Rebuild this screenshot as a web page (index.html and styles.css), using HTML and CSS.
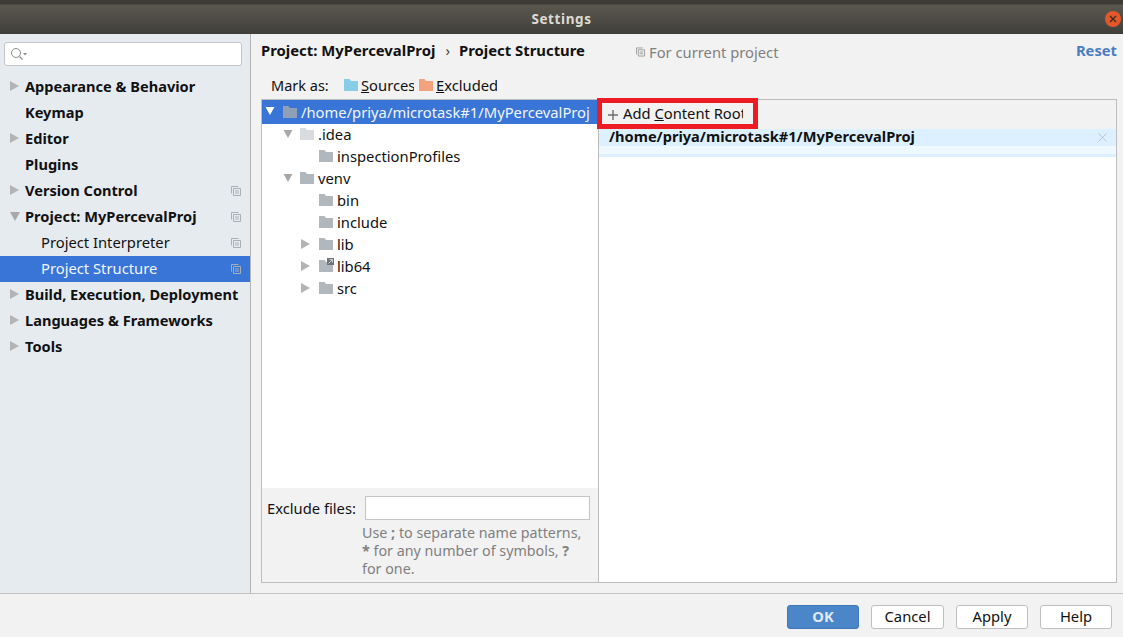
FILE: index.html
```html
<!DOCTYPE html>
<html lang="en">
<head>
<meta charset="utf-8">
<title>Settings</title>
<link rel="stylesheet" href="styles.css">
</head>
<body>
<svg class="defs" width="0" height="0" aria-hidden="true">
  <symbol id="folder" viewBox="0 0 14 12"><path d="M0 0H5.500L7 2H14V12H0Z"/></symbol>
  <symbol id="copy" viewBox="0 0 10 10"><path d="M.5 7.500V.5H7.500M2.500 2.500H9.500V9.500H2.500ZM4 5H8M4 7H8" fill="none" stroke="currentColor"/></symbol>
  <symbol id="right" viewBox="0 0 9 10"><path d="M0 0L9 5L0 10Z"/></symbol>
  <symbol id="down" viewBox="0 0 10 9"><path d="M0 0H10L5 9Z"/></symbol>
</svg>
<div class="window">
  <header class="titlebar">
    <span class="title">Settings</span>
    <span class="close"><svg viewBox="0 0 8 8" width="8" height="8"><path d="M1 1L7 7M7 1L1 7" stroke="#3b2a20" stroke-width="1.300"/></svg></span>
  </header>
  <div class="content">
    <aside class="sidebar">
      <div class="search"><svg width="18" height="14" viewBox="0 0 18 14"><circle cx="6" cy="6" r="4.500" fill="none" stroke="#8c8c8c"/><path d="M9.500 9.500L12.500 12.500" stroke="#8c8c8c" stroke-width="1.300"/><path d="M13 6H17L15 8.500Z" fill="#8c8c8c"/></svg></div>
      <nav class="nav">
        <div class="nav-row bold"><svg class="arrow"><use href="#right"/></svg><span>Appearance &amp; Behavior</span></div>
        <div class="nav-row bold"><span>Keymap</span></div>
        <div class="nav-row bold"><svg class="arrow"><use href="#right"/></svg><span>Editor</span></div>
        <div class="nav-row bold"><span>Plugins</span></div>
        <div class="nav-row bold"><svg class="arrow"><use href="#right"/></svg><span>Version Control</span><svg class="copy"><use href="#copy"/></svg></div>
        <div class="nav-row bold"><svg class="arrow-down"><use href="#down"/></svg><span>Project: MyPercevalProj</span><svg class="copy"><use href="#copy"/></svg></div>
        <div class="nav-row child"><span>Project Interpreter</span><svg class="copy"><use href="#copy"/></svg></div>
        <div class="nav-row child selected"><span>Project Structure</span><svg class="copy"><use href="#copy"/></svg></div>
        <div class="nav-row bold"><svg class="arrow"><use href="#right"/></svg><span>Build, Execution, Deployment</span></div>
        <div class="nav-row bold"><svg class="arrow"><use href="#right"/></svg><span>Languages &amp; Frameworks</span></div>
        <div class="nav-row bold"><svg class="arrow"><use href="#right"/></svg><span>Tools</span></div>
      </nav>
    </aside>
    <main class="main">
      <div class="crumbs">
        <b>Project: MyPercevalProj</b><span class="sep">›</span><b>Project Structure</b>
        <span class="scope"><svg class="copy-sm"><use href="#copy"/></svg>For current project</span>
        <a class="reset">Reset</a>
      </div>
      <div class="markbar">
        <span class="mark-label">Mark as:</span>
        <span class="mark mark-src"><svg class="mark-folder src"><use href="#folder"/></svg><span class="clip"><u>S</u>ources</span></span>
        <span class="mark mark-exc"><svg class="mark-folder exc"><use href="#folder"/></svg><span class="clip"><u>E</u>xcluded</span></span>
      </div>
      <div class="panel">
        <section class="left">
          <div class="tree">
            <div class="tree-row root"><svg class="t-down white"><use href="#down"/></svg><svg class="folder rootf"><use href="#folder"/></svg><span>/home/priya/microtask#1/MyPercevalProj</span></div>
            <div class="tree-row d1"><svg class="t-down"><use href="#down"/></svg><svg class="folder light"><use href="#folder"/></svg><span>.idea</span></div>
            <div class="tree-row d2"><svg class="folder"><use href="#folder"/></svg><span>inspectionProfiles</span></div>
            <div class="tree-row d1"><svg class="t-down"><use href="#down"/></svg><svg class="folder"><use href="#folder"/></svg><span>venv</span></div>
            <div class="tree-row d2"><svg class="folder"><use href="#folder"/></svg><span>bin</span></div>
            <div class="tree-row d2"><svg class="folder"><use href="#folder"/></svg><span>include</span></div>
            <div class="tree-row d2 has-arrow"><svg class="t-right"><use href="#right"/></svg><svg class="folder"><use href="#folder"/></svg><span>lib</span></div>
            <div class="tree-row d2 has-arrow"><svg class="t-right"><use href="#right"/></svg><span class="linkwrap"><svg class="folder"><use href="#folder"/></svg><svg class="linkbadge" viewBox="0 0 7 7" width="7" height="7"><rect width="7" height="7" fill="#6e7478"/><path d="M1.500 5.500L5 2M2.500 1.500H5.500V4.500" fill="none" stroke="#c9d2d8"/></svg></span><span>lib64</span></div>
            <div class="tree-row d2 has-arrow"><svg class="t-right"><use href="#right"/></svg><svg class="folder"><use href="#folder"/></svg><span>src</span></div>
          </div>
          <div class="exclude">
            <div class="exclude-row"><label>Exclude files:</label><div class="input"></div></div>
            <p class="hint">Use <b>;</b> to separate name patterns,<br><b>*</b> for any number of symbols, <b>?</b><br>for one.</p>
          </div>
        </section>
        <section class="right">
          <div class="toolbar">
            <svg class="plus" width="12" height="12" viewBox="0 0 12 12"><path d="M6 1V11M1 6H11" stroke="#6e6e6e" stroke-width="1.400"/></svg>
            <span class="add">Add <u>C</u>ontent Root</span>
          </div>
          <div class="root-head"><b>/home/priya/microtask#1/MyPercevalProj</b><svg width="9" height="9" viewBox="0 0 9 9"><path d="M.5 .5L8.500 8.500M8.500 .5L.5 8.500" stroke="#b9c6d0"/></svg></div>
          <div class="root-sub"></div>
        </section>
        <div class="highlight"></div>
      </div>
    </main>
  </div>
  <footer class="footer">
    <button class="btn primary">OK</button>
    <button class="btn w73">Cancel</button>
    <button class="btn">Apply</button>
    <button class="btn">Help</button>
  </footer>
</div>
</body>
</html>
```
FILE: styles.css
```css
* { box-sizing: border-box; }
html, body { margin: 0; height: 100%; overflow: hidden; }
body { font-family: "Noto Sans", "Open Sans", sans-serif; font-size: 14.75px; color: #111; background: #f2f2f2; }
.defs { position: absolute; }
.window { display: flex; flex-direction: column; height: 637px; width: 1123px; }

.titlebar { position: relative; height: 34px; flex: none; display: flex; align-items: center; justify-content: center; padding-top: 4px;
  background: linear-gradient(#3c3b36 0, #3c3b36 4px, #5a574e 5px, #4d4b44 20px, #3f3e39 34px); }
.title { color: #dfdbd2; font-weight: 700; font-size: 13.500px; letter-spacing: .6px; }
.close { position: absolute; right: 2px; top: 11px; width: 16px; height: 16px; border-radius: 50%; background: #e2582a; display: flex; align-items: center; justify-content: center; }

.content { flex: 1; display: flex; min-height: 0; }
.sidebar { width: 251px; flex: none; background: #e6ebf0; border-right: 1px solid #b4b4b4; padding-top: 8px; }
.search { width: 238px; height: 24px; margin-left: 4px; background: #fff; border: 1px solid #c4c4c4; border-radius: 3px; display: flex; align-items: center; padding-left: 5px; }
.nav { margin-top: 8px; }
.nav-row { position: relative; height: 26px; display: flex; align-items: center; padding: 0 0 2px 25px; white-space: nowrap; }
.nav-row.bold { font-weight: 700; font-size: 14.6px; }
.nav-row.child { padding-left: 41px; }
.nav-row.selected { background: #3875d7; color: #f2f6fc; }
.arrow { position: absolute; left: 10px; top: 7px; width: 9px; height: 10px; fill: #b4b4b4; }
.arrow-down { position: absolute; left: 10px; top: 8px; width: 10px; height: 9px; fill: #a8a8a8; }
.copy { position: absolute; left: 231px; top: 8px; width: 10px; height: 10px; color: #a9b0b5; }

.main { flex: 1; min-width: 0; display: flex; flex-direction: column; padding: 0 6px 10px 10px; }
.crumbs { position: relative; height: 35px; flex: none; display: flex; align-items: center; padding-bottom: 4px; }
.crumbs b { font-size: 14.85px; }
.sep { margin: 0 9px 0 10px; color: #444; }
.scope { position: absolute; left: 375px; top: 8px; color: #808080; display: flex; align-items: center; }
.copy-sm { width: 9px; height: 10px; color: #9a9a9a; margin-right: 4px; }
.reset { margin-left: auto; color: #4a7cc4; font-weight: 700; }
.markbar { height: 30px; flex: none; display: flex; align-items: center; padding: 2px 0 0 10px; }
.mark-label { width: 73px; font-size: 14.500px; }
.mark { display: flex; align-items: center; }
.mark-src { width: 75px; }
.mark-folder { width: 14px; height: 12px; margin-right: 3px; flex: none; }
.src { fill: #87cde8; }
.exc { fill: #f2a27c; }
.clip { display: block; overflow: hidden; white-space: nowrap; }
.mark-src .clip { width: 53px; }
.mark-exc .clip { width: 61px; }

.panel { position: relative; flex: 1; min-height: 0; display: flex; border: 1px solid #bdbdbd; }
.left { width: 337px; flex: none; display: flex; flex-direction: column; border-right: 1px solid #bdbdbd; }
.tree { flex: 1; background: #fff; }
.tree-row { position: relative; height: 22px; display: flex; align-items: center; white-space: nowrap; }
.tree-row .folder { margin-right: 4px; }
.root { height: 24px; background: #3875d7; color: #f2f6fc; padding-left: 21px; margin-bottom: -1px; }
.d1 { padding-left: 38px; }
.d2 { padding-left: 57px; }
.folder { width: 14px; height: 12px; fill: #b0b8be; flex: none; }
.folder.light { fill: #d8dce0; }
.folder.rootf { fill: #8f9fb5; }
.t-down { position: absolute; left: 21px; top: 7px; width: 10px; height: 8px; fill: #a8a8a8; }
.t-down.white { left: 3px; top: 7px; fill: #fff; }
.t-right { position: absolute; left: 39px; top: 6px; width: 9px; height: 10px; fill: #b4b4b4; }
.linkwrap { position: relative; display: flex; }
.linkbadge { position: absolute; left: 8px; top: -2px; }

.exclude { height: 94px; flex: none; padding: 8px 8px 0 5px; }
.exclude-row { display: flex; align-items: center; height: 24px; }
.exclude-row label { width: 98px; }
.input { width: 225px; height: 24px; background: #fff; border: 1px solid #c4c4c4; }
.hint { margin: 4px 0 0 95px; color: #808080; font-size: 14.300px; line-height: 18px; }

.right { flex: 1; min-width: 0; display: flex; flex-direction: column; background: #fff; }
.toolbar { height: 29px; flex: none; background: #f2f2f2; display: flex; align-items: center; padding: 0 0 4px 8px; }
.plus { margin-top: 4px; }
.add { margin-left: 4px; width: 120px; overflow: hidden; white-space: nowrap; }
.root-head { height: 17px; flex: none; background: #dcf0ff; display: flex; align-items: center; justify-content: space-between; padding: 0 9px 0 10px; }
.root-head b { margin-top: -4px; font-size: 14.6px; }
.root-sub { height: 11px; flex: none; background: #eef8ff; border-bottom: 3px solid #dcf0ff; }
.highlight { position: absolute; left: 335px; top: -2px; width: 161px; height: 31px; border: 5px solid #ed1c24; }

.footer { height: 44px; flex: none; border-top: 1px solid #c4c4c4; display: flex; align-items: flex-start; justify-content: flex-end; gap: 12px; padding: 11px 11px 0 0; }
.btn { width: 72px; height: 24px; padding: 0 0 2px; font: inherit; color: #111; background: #fff; border: 1px solid #bfbfbf; border-radius: 3px; }
.btn.w73 { width: 73px; }
.btn.primary { background: #4a86c8; border-color: #3f78b8; color: #dfe9f5; font-weight: 700; }
```
